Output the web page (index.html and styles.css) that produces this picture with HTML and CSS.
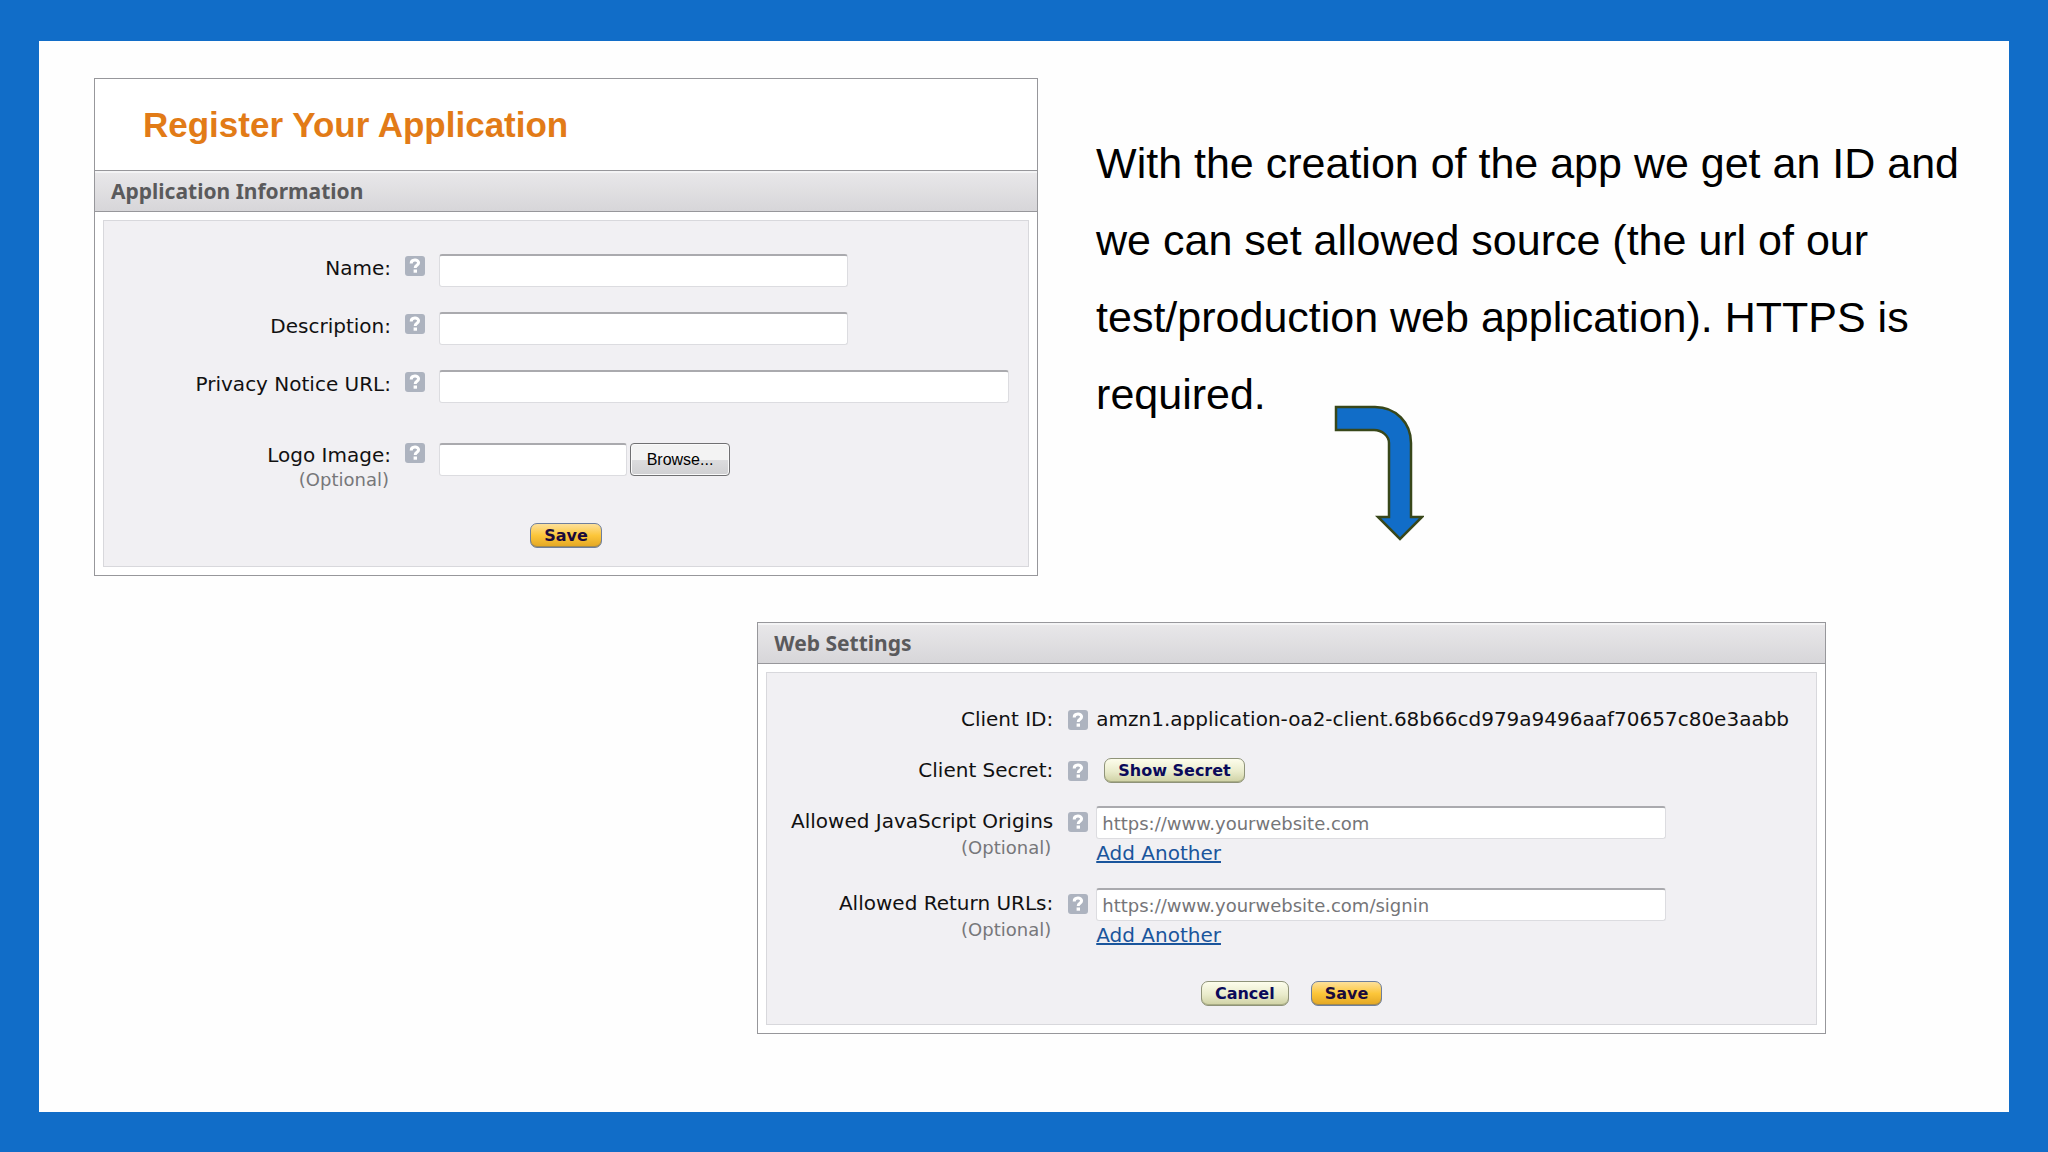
FILE: index.html
```
<!DOCTYPE html>
<html lang="en">

<head>
    <meta charset="utf-8">
    <title>Register Your Application</title>
    <link rel="stylesheet" href="styles.css">
</head>

<body>
    <svg class="symbols" aria-hidden="true">
        <symbol id="help" viewBox="0 0 20 20">
            <rect width="20" height="20" rx="3" fill="#adb3bf" />
            <path d="M6.2 7.4C6.2 3 13.6 3 13.6 6.8C13.6 9.4 10.2 9.2 10.2 12" fill="none" stroke="#fff" stroke-width="3" />
            <rect x="8.6" y="13.5" width="3.4" height="3.2" fill="#fff" />
        </symbol>
    </svg>

    <main class="slide">
        <div class="top">
            <form class="panel">
                <h1>Register Your Application</h1>
                <h2>Application Information</h2>
                <div class="box">
                    <div class="row">
                        <label for="name">Name:</label>
                        <svg class="help"><use href="#help" /></svg>
                        <input type="text" id="name" class="short">
                    </div>
                    <div class="row">
                        <label for="description">Description:</label>
                        <svg class="help"><use href="#help" /></svg>
                        <input type="text" id="description" class="short">
                    </div>
                    <div class="row">
                        <label for="privacy">Privacy Notice URL:</label>
                        <svg class="help"><use href="#help" /></svg>
                        <input type="text" id="privacy">
                    </div>
                    <div class="row logo-row">
                        <label for="logo">Logo Image:<small>(Optional)</small></label>
                        <svg class="help"><use href="#help" /></svg>
                        <div class="file">
                            <input type="text" id="logo">
                            <button type="button" class="browse">Browse...</button>
                        </div>
                    </div>
                    <div class="actions">
                        <button type="button" class="btn save">Save</button>
                    </div>
                </div>
            </form>

            <div class="note">
                <p>With the creation of the app we get an ID and we can set allowed source (the url of our test/production web application). HTTPS is required.</p>
                <svg class="arrow" viewBox="0 0 90 136">
                    <path d="M2 2H41C62 2 77 18 77 38V112H88L66 134L44 112H55V38C55 31 48 25 40 25H2Z" fill="#116dc8" stroke="#38471a" stroke-width="2.5" />
                </svg>
            </div>
        </div>

        <form class="panel web">
            <h2>Web Settings</h2>
            <div class="box">
                <div class="row">
                    <span class="label">Client ID:</span>
                    <svg class="help"><use href="#help" /></svg>
                    <span class="value">amzn1.application-oa2-client.68b66cd979a9496aaf70657c80e3aabb</span>
                </div>
                <div class="row">
                    <label for="secret">Client Secret:</label>
                    <svg class="help"><use href="#help" /></svg>
                    <div class="secret">
                        <button type="button" id="secret" class="btn">Show Secret</button>
                    </div>
                </div>
                <div class="row">
                    <label for="origins">Allowed JavaScript Origins<small>(Optional)</small></label>
                    <svg class="help"><use href="#help" /></svg>
                    <div>
                        <input type="text" id="origins" placeholder="https://www.yourwebsite.com">
                        <a href="#">Add Another</a>
                    </div>
                </div>
                <div class="row">
                    <label for="returns">Allowed Return URLs:<small>(Optional)</small></label>
                    <svg class="help"><use href="#help" /></svg>
                    <div>
                        <input type="text" id="returns" placeholder="https://www.yourwebsite.com/signin">
                        <a href="#">Add Another</a>
                    </div>
                </div>
                <div class="actions">
                    <button type="button" class="btn">Cancel</button>
                    <button type="button" class="btn save">Save</button>
                </div>
            </div>
        </form>
    </main>
</body>

</html>
```

FILE: styles.css
```
* {
    box-sizing: border-box;
}

body {
    margin: 0;
    font-family: "DejaVu Sans", Verdana, sans-serif;
    font-size: 20px;
    color: #111;
}

.symbols {
    display: none;
}

.slide {
    min-height: 100vh;
    padding: 37px 40px 40px 55px;
    border: solid #116dc8;
    border-width: 41px 39px 40px;
    background-color: #fefefe;
}

.top {
    display: flex;
    gap: 58px;
    align-items: flex-start;
}

/* panels */
.panel {
    width: 50.35%;
    flex-shrink: 0;
    border: 1px solid #97979b;
    background-color: #fff;
}

.web {
    width: 57%;
    margin: 46px 143px 0 auto;
}

h1 {
    margin: 0;
    padding: 26px 48px 25px;
    font-family: "Liberation Sans", Arial, sans-serif;
    font-size: 35px;
    line-height: 40px;
    color: #e27b17;
}

h2 {
    margin: 0;
    padding: 1px 16px 0;
    font-family: "Noto Sans", Tahoma, sans-serif;
    font-size: 21px;
    line-height: 39px;
    color: #5a5a5c;
    background: linear-gradient(#e9e8ea, #d7d6d9);
    border-bottom: 1px solid #97979b;
    box-shadow: inset 0 2px #f4f4f5;
}

h1 + h2 {
    border-top: 1px solid #97979b;
}

.box {
    margin: 8px;
    padding: 33px 18px 18px 0;
    border: 1px solid #d8d8dc;
    background-color: #f1f0f3;
}

.web .box {
    padding-top: 31px;
}

/* form rows */
.row {
    display: grid;
    grid-template-columns: 287px 20px 1fr;
    column-gap: 14px;
    align-items: start;
    margin-bottom: 25px;
}

.web .row {
    grid-template-columns: 286px 35px 1fr;
    column-gap: 0;
    margin-bottom: 21px;
}

.row label,
.label {
    text-align: right;
    line-height: 28px;
}

.web label,
.web .label,
.value {
    line-height: 30px;
}

small {
    display: block;
    padding-right: 2px;
    font-size: 18px;
    line-height: 22px;
    color: #77777a;
}

.web small {
    line-height: 24px;
}

.help {
    width: 20px;
    height: 20px;
    margin-top: 2px;
}

.web .help {
    justify-self: end;
    margin-top: 6px;
}

.web .row > :last-child {
    margin-left: 8px;
}

input {
    display: block;
    width: 570px;
    max-width: 100%;
    height: 33px;
    padding: 0 5px;
    border: 1px solid #dcdce0;
    border-top: 2px solid #aaaaae;
    border-radius: 3px;
    background-color: #fff;
    font-family: inherit;
    font-size: 18px;
}

input::placeholder {
    color: #757578;
}

.short {
    width: 409px;
}

a {
    display: inline-block;
    line-height: 28px;
    color: #1a559c;
}

.logo-row {
    margin-top: 38px;
}

.file {
    display: flex;
    gap: 3px;
    margin-top: 2px;
}

.file input {
    width: 188px;
}

/* buttons */
.browse {
    width: 100px;
    height: 33px;
    padding: 0;
    border: 1px solid #707072;
    border-radius: 4px;
    background: linear-gradient(#f3f3f3 50%, #dddddf 50%, #d0d0d2);
    box-shadow: inset 0 0 0 1px #fafafa;
    font-family: "Liberation Sans", Arial, sans-serif;
    font-size: 16px;
}

.row:nth-last-child(2) {
    margin-bottom: 0;
}

.actions {
    display: flex;
    justify-content: center;
    gap: 22px;
    margin: 32px -18px 0 0;
}

.btn {
    height: 25px;
    padding: 1px 13px 0;
    border: 1px solid #8f9379;
    border-radius: 7px;
    background: linear-gradient(#fdfdec, #e9ebcb 55%, #cfd1a4);
    box-shadow: inset 0 -1px #a9ad85;
    font-family: inherit;
    font-size: 16px;
    font-weight: bold;
    line-height: 22px;
    color: #0a0a5a;
}

.save {
    border-color: #6f7f9c;
    background: linear-gradient(#fde09a, #fcc63a 50%, #e3a623);
    box-shadow: inset 0 -1px #a08a50;
    color: #1a0a3c;
}

.secret {
    padding: 3px 8px 2px;
}

.secret .btn {
    display: block;
}

/* text beside the first panel */
.note {
    position: relative;
    flex: 1;
    padding-top: 47px;
}

.note p {
    margin: 0;
    font-family: "Liberation Sans", Arial, sans-serif;
    font-size: 43px;
    line-height: 77px;
    color: #000;
}

.arrow {
    position: absolute;
    top: 327px;
    left: 238px;
    width: 90px;
    height: 136px;
}
```
